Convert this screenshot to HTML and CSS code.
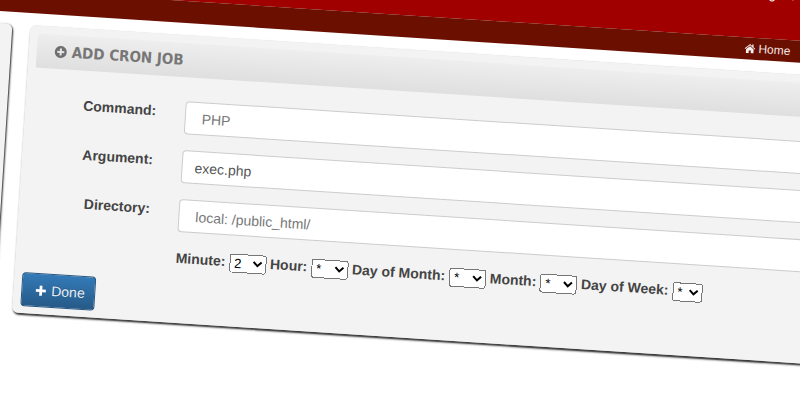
FILE: index.html
```html
<!DOCTYPE html>
<html lang="en">
<head>
    <meta charset="UTF-8">
    <meta name="viewport" content="width=device-width, initial-scale=1.0">
    <title>Add Cron Job</title>
    <link rel="stylesheet" href="styles.css">
</head>
<body>
    <div class="stage">
        <header class="topbar">
            <span class="user">Logout</span>
        </header>
        <nav class="subbar">
            <a class="crumb" href="#">
                <svg class="icon-home" viewBox="0 0 16 14" aria-hidden="true"><path d="M8 0.5 0.3 7l0.8 1L8 2.3 14.9 8l0.8-1-2.7-2.3V1h-2v2L8 0.5zM2.5 8.2V14h4v-4h3v4h4V8.2L8 3.6 2.5 8.2z"/></svg>
                Home
            </a>
        </nav>
        <div class="content">
            <aside class="sidebar"></aside>
            <main class="card">
                <div class="card-head">
                    <svg class="icon-add" viewBox="0 0 14 14" aria-hidden="true"><path fill-rule="evenodd" d="M7 1a6 6 0 1 0 0 12A6 6 0 0 0 7 1zM6 3.5h2V6h2.500v2H8v2.500H6V8H3.500V6H6z"/></svg>
                    <h2>Add Cron Job</h2>
                </div>
                <form class="cron-form">
                    <div class="field">
                        <label for="command">Command:</label>
                        <input class="wide" id="command" type="text" value="PHP">
                    </div>
                    <div class="field">
                        <label for="argument">Argument:</label>
                        <input id="argument" type="text" value="exec.php">
                    </div>
                    <div class="field">
                        <label for="directory">Directory:</label>
                        <input class="wide" id="directory" type="text" value="local: /public_html/">
                    </div>
                    <div class="schedule">
                        <label for="minute">Minute:</label>
                        <select id="minute"><option>2</option><option>59</option></select>
                        <label for="hour">Hour:</label>
                        <select id="hour"><option>*</option><option>23</option></select>
                        <label for="day">Day of Month:</label>
                        <select id="day"><option>*</option><option>31</option></select>
                        <label for="month">Month:</label>
                        <select id="month"><option>*</option><option>12</option></select>
                        <label for="week">Day of Week:</label>
                        <select id="week"><option>*</option><option>6</option></select>
                    </div>
                    <button type="button" class="btn">
                        <svg class="icon-plus" viewBox="0 0 12 12" aria-hidden="true"><path d="M4.500 0.500h3v4h4v3h-4v4h-3v-4h-4v-3h4z"/></svg>
                        Done
                    </button>
                </form>
            </main>
        </div>
    </div>
</body>
</html>
```

FILE: styles.css
```css
html, body {
    margin: 0;
    height: 100%;
    overflow: hidden;
    background-color: #fff;
}
/* whole page is photographed at a tilt, origin sits on the window corner */
.stage {
    width: 1000px;
    margin: -100px 0 0 -40px;
    transform-origin: 40px 100px;
    transform: rotate(3.7deg);
    font-family: "Liberation Sans", Arial, sans-serif;
    font-size: 14px;
    color: #444;
}
.topbar {
    height: 89px;
    background-color: #a00000;
    display: flex;
    justify-content: flex-end;
    padding-right: 168px;
    box-sizing: border-box;
    align-items: center;
}
.user {
    color: #fff;
    font-size: 13px;
}
.subbar {
    height: 22px;
    background-color: #6b0f00;
    display: flex;
    justify-content: flex-end;
    align-items: center;
    padding-right: 168px;
}
.crumb {
    color: #f2e6e3;
    font-size: 12px;
    text-decoration: none;
    display: flex;
    align-items: center;
    gap: 3px;
}
.icon-home {
    width: 11px;
    height: 10px;
    fill: #f5eeee;
}
.content {
    display: flex;
    gap: 18px;
    padding-top: 12px;
    height: 300px;
}
.sidebar {
    width: 54px;
    height: 288px;
    background-color: #f3f3f3;
    border-radius: 6px;
    box-shadow: 1px 1px 2px #222;
}
.card {
    flex: 1;
    height: 288px;
    box-sizing: border-box;
    padding: 8px;
    background-color: #f3f3f3;
    border-radius: 6px;
    box-shadow: 0 0 1px #ddd, 1px 2px 2px #222;
}
.card-head {
    height: 34px;
    display: flex;
    align-items: center;
    gap: 4px;
    padding-left: 17px;
    border-radius: 4px 4px 0 0;
    background: linear-gradient(#eeeeee, #dfdfdf);
}
.card-head h2 {
    margin: 0;
    font-family: "Liberation Sans Narrow", "DejaVu Sans Condensed", sans-serif;
    font-size: 15px;
    font-weight: bold;
    text-transform: uppercase;
    color: #777;
}
.icon-add {
    width: 14px;
    height: 14px;
    fill: #707070;
}
.cron-form {
    padding-top: 24px;
}
.field {
    display: flex;
    gap: 29px;
    margin-bottom: 16px;
}
.field label {
    width: 123px;
    text-align: right;
    font-weight: bold;
    padding-top: 3px;
}
.field input {
    flex: 1;
    height: 33px;
    box-sizing: border-box;
    padding: 0 12px;
    border: 1px solid #ccc;
    border-radius: 4px;
    background-color: #fff;
    font-family: inherit;
    font-size: 14px;
    color: #555;
}
.field input.wide {
    padding-left: 16px;
    color: #777;
}
.schedule {
    margin-left: 152px;
    height: 20px;
    line-height: 20px;
    font-weight: bold;
}
.schedule select {
    font-family: inherit;
    font-size: 13.33px;
    vertical-align: middle;
}
.btn {
    display: flex;
    align-items: center;
    gap: 5px;
    width: 74px;
    height: 34px;
    margin-top: 14px;
    padding: 0 0 0 13px;
    border: 1px solid #245580;
    border-radius: 4px;
    background: linear-gradient(#337ab7, #265a88);
    color: #e8eef4;
    font-family: inherit;
    font-size: 14px;
    text-shadow: 0 -1px 0 rgba(0, 0, 0, 0.2);
}
.icon-plus {
    width: 11px;
    height: 11px;
    fill: #fff;
}
```
